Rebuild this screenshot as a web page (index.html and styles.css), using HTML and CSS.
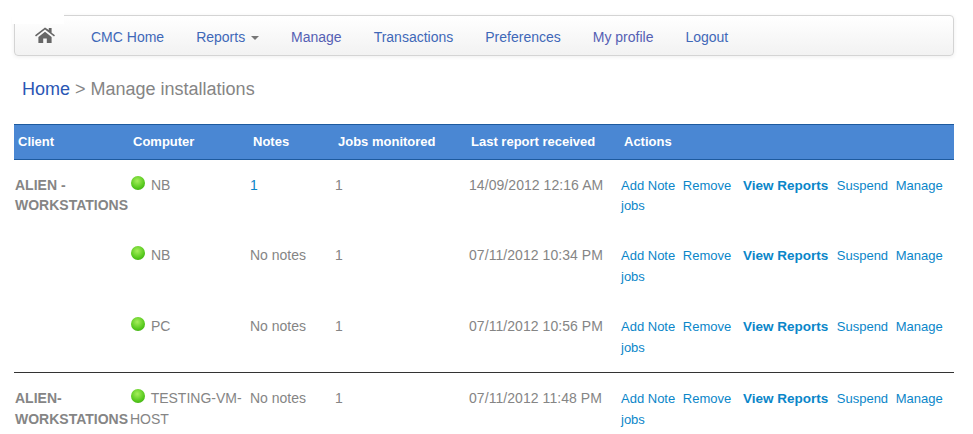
FILE: index.html
```html
<!DOCTYPE html>
<html lang="en">
<head>
<meta charset="utf-8">
<title>Manage installations</title>
<link rel="stylesheet" href="styles.css">
</head>
<body>
<nav class="navbar">
  <span class="notch"></span>
  <a class="nav-home" href="#" aria-label="Home">
    <svg width="20" height="16" viewBox="0 0 20 18" preserveAspectRatio="none"><path fill="#666" d="M10 .6 0 9.4l1 1.2L10 2.8l9 7.8 1-1.2-3.4-3V1.2h-2.8v2.2zM3.4 11.2V18h4.8v-5.2h3.6V18h4.8v-6.8L10 5.4z"/></svg>
  </a>
  <a class="nav-link" href="#">CMC Home</a>
  <a class="nav-link" href="#">Reports <span class="caret"></span></a>
  <a class="nav-link nav-visited" href="#">Manage</a>
  <a class="nav-link" href="#">Transactions</a>
  <a class="nav-link" href="#">Preferences</a>
  <a class="nav-link nav-visited" href="#">My profile</a>
  <a class="nav-link" href="#">Logout</a>
</nav>
<h1 class="crumbs"><a href="#">Home</a> &gt; Manage installations</h1>
<table class="grid">
  <colgroup>
    <col class="c1"><col class="c2"><col class="c3"><col class="c4"><col class="c5"><col class="c6">
  </colgroup>
  <thead>
    <tr>
      <th>Client</th><th>Computer</th><th>Notes</th><th>Jobs monitored</th><th>Last report received</th><th>Actions</th>
    </tr>
  </thead>
  <tbody>
    <tr>
      <td class="client">ALIEN - WORKSTATIONS</td>
      <td><span class="dot"></span> NB</td>
      <td><a href="#">1</a></td>
      <td>1</td>
      <td class="date">14/09/2012 12:16 AM</td>
      <td class="actions"><a href="#">Add Note</a> <a href="#">Remove</a> <a class="strong" href="#">View Reports</a> <a href="#">Suspend</a> <a href="#"><span>Manage</span> <span>jobs</span></a></td>
    </tr>
    <tr>
      <td class="client"></td>
      <td><span class="dot"></span> NB</td>
      <td>No notes</td>
      <td>1</td>
      <td class="date">07/11/2012 10:34 PM</td>
      <td class="actions"><a href="#">Add Note</a> <a href="#">Remove</a> <a class="strong" href="#">View Reports</a> <a href="#">Suspend</a> <a href="#"><span>Manage</span> <span>jobs</span></a></td>
    </tr>
    <tr class="group-end">
      <td class="client"></td>
      <td><span class="dot"></span> PC</td>
      <td>No notes</td>
      <td>1</td>
      <td class="date">07/11/2012 10:56 PM</td>
      <td class="actions"><a href="#">Add Note</a> <a href="#">Remove</a> <a class="strong" href="#">View Reports</a> <a href="#">Suspend</a> <a href="#"><span>Manage</span> <span>jobs</span></a></td>
    </tr>
    <tr class="group-start">
      <td class="client">ALIEN-WORKSTATIONS</td>
      <td><span class="dot"></span> TESTING-VM-HOST</td>
      <td>No notes</td>
      <td>1</td>
      <td class="date">07/11/2012 11:48 PM</td>
      <td class="actions"><a href="#">Add Note</a> <a href="#">Remove</a> <a class="strong" href="#">View Reports</a> <a href="#">Suspend</a> <a href="#"><span>Manage</span> <span>jobs</span></a></td>
    </tr>
  </tbody>
</table>
</body>
</html>
```

FILE: styles.css
```css
* { box-sizing: border-box; }

html, body { height: 434px; overflow: hidden; }

body {
  margin: 0;
  padding: 15px 19px 0 14px;
  background: #fff;
  font-family: "Liberation Sans", Arial, sans-serif;
  font-size: 14px;
  line-height: 20.4px;
  color: #858585;
}

a { text-decoration: none; }

.navbar {
  position: relative;
  display: flex;
  align-items: center;
  width: 940px;
  height: 41px;
  padding: 4px 0 0 20px;
  border: 1px solid #d4d4d4;
  border-radius: 4px;
  background: linear-gradient(#ffffff, #f2f2f2);
  box-shadow: 0 1px 4px rgba(0, 0, 0, .07);
}

.notch {
  position: absolute;
  left: -3px;
  top: -3px;
  width: 52px;
  height: 11px;
  background: #fff;
}

.nav-home {
  position: relative;
  display: flex;
  width: 20px;
  height: 16px;
  margin-top: -6px;
  margin-right: 36px;
}

.nav-link {
  margin-right: 32px;
  color: #3f68b8;
  font-size: 14px;
}

.nav-visited { color: #5560b4; }

.caret {
  display: inline-block;
  width: 0;
  height: 0;
  margin-left: 2px;
  vertical-align: 2px;
  border-top: 4px solid #777;
  border-left: 4px solid transparent;
  border-right: 4px solid transparent;
}

.crumbs {
  margin: 22px 0 0 8px;
  height: 46px;
  font-size: 18px;
  line-height: 22px;
  font-weight: 400;
  color: #858585;
}

.crumbs a { color: #2a56b4; }

.grid {
  width: 940px;
  table-layout: fixed;
  border-collapse: collapse;
}

.c1 { width: 116px; }
.c2 { width: 120px; }
.c3 { width: 85px; }
.c4 { width: 133px; }
.c5 { width: 152px; }

.grid th {
  height: 35px;
  padding: 0 0 0 3px;
  text-align: left;
  font-size: 13px;
  font-weight: 700;
  color: #fff;
  background: #4a87d3;
  border-top: 1px solid #1e5a9e;
  border-bottom: 1px solid #1e5a9e;
}

.grid th:first-child { padding-left: 4px; }
.grid th:last-child { padding-left: 4px; }

.grid td {
  height: 70.8px;
  padding: 15px 0 0 0;
  vertical-align: top;
  font-size: 14px;
}

.grid .group-end td { height: 71.8px; }

.grid td a { color: #0a86c9; }

.grid td:first-child { padding-left: 1px; }

.client { font-weight: 700; }

.group-start td { border-top: 1px solid #333; }

.dot {
  display: inline-block;
  width: 14px;
  height: 14px;
  margin-left: 1px;
  margin-right: 2px;
  vertical-align: 0;
  border-radius: 50%;
  background: radial-gradient(circle at 45% 35%, #a6ee5c, #55c81c 60%, #2f9a0e);
}

.grid .date { padding-left: 1px; letter-spacing: .06px; }

.grid .actions { padding: 16px 0 0 1px; font-size: 13px; }

.actions a { margin-right: 4px; }

.actions .strong { margin-left: 4px; margin-right: 5px; font-size: 13.5px; font-weight: 700; }
```
